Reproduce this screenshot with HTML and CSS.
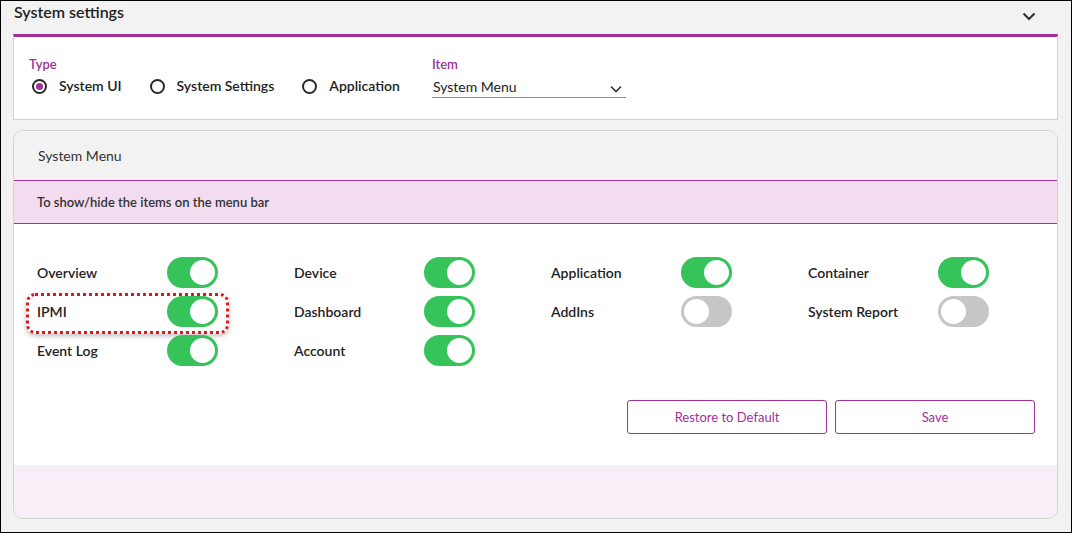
FILE: index.html
```html
<!DOCTYPE html>
<html>
<head>
<meta charset="utf-8">
<link rel="stylesheet" href="styles.css">
</head>
<body>
<div class="frame">
  <div class="page-head">
    <span class="page-title">System settings</span>
    <svg class="head-chevron" width="14" height="9" viewBox="0 0 14 9"><path d="M1.5 1.5 L7 7 L12.5 1.5" fill="none" stroke="#333" stroke-width="2.2"/></svg>
  </div>
  <div class="filter-card">
    <div class="field type-field">
      <div class="field-label">Type</div>
      <div class="radios">
        <label class="radio checked"><span class="dot"></span>System UI</label>
        <label class="radio"><span class="dot"></span>System Settings</label>
        <label class="radio"><span class="dot"></span>Application</label>
      </div>
    </div>
    <div class="field item-field">
      <div class="field-label">Item</div>
      <div class="select">
        <span>System Menu</span>
        <svg width="12" height="8" viewBox="0 0 12 8"><path d="M1 1.5 L6 6.5 L11 1.5" fill="none" stroke="#333" stroke-width="1.6"/></svg>
      </div>
    </div>
  </div>
  <div class="menu-card">
    <div class="menu-head">System Menu</div>
    <div class="menu-note">To show/hide the items on the menu bar</div>
    <div class="menu-body">
      <div class="switch-grid">
        <div class="sw-item"><span class="sw-label">Overview</span><span class="switch on"></span></div>
        <div class="sw-item"><span class="sw-label">Device</span><span class="switch on"></span></div>
        <div class="sw-item"><span class="sw-label">Application</span><span class="switch on"></span></div>
        <div class="sw-item"><span class="sw-label">Container</span><span class="switch on"></span></div>
        <div class="sw-item highlighted"><span class="sw-label">IPMI</span><span class="switch on"></span><span class="hl-box"></span></div>
        <div class="sw-item"><span class="sw-label">Dashboard</span><span class="switch on"></span></div>
        <div class="sw-item"><span class="sw-label">AddIns</span><span class="switch"></span></div>
        <div class="sw-item"><span class="sw-label">System Report</span><span class="switch"></span></div>
        <div class="sw-item"><span class="sw-label">Event Log</span><span class="switch on"></span></div>
        <div class="sw-item"><span class="sw-label">Account</span><span class="switch on"></span></div>
      </div>
      <div class="actions">
        <button class="btn">Restore to Default</button>
        <button class="btn">Save</button>
      </div>
    </div>
    <div class="menu-foot"></div>
  </div>
</div>
</body>
</html>
```

FILE: styles.css
```css
* { box-sizing: border-box; }
html, body { margin: 0; padding: 0; }
body {
  font-family: "Lato", "Liberation Sans", sans-serif;
  color: #222;
}
.frame {
  width: 1072px;
  height: 533px;
  border: 1px solid #000;
  background: #f2f2f2;
  padding: 0 13px 0 12px;
  overflow: hidden;
}
.page-head {
  height: 33px;
  display: flex;
  align-items: flex-start;
  justify-content: space-between;
  padding: 1px 22px 0 1px;
}
.page-title {
  font-size: 16px;
  font-weight: 600;
  color: #222;
  line-height: 20px;
}
.head-chevron { margin-top: 10px; }
.filter-card {
  background: #fff;
  border: 1px solid #d2d2d2;
  border-top: 3px solid #a0309a;
  height: 86px;
  display: flex;
  gap: 32px;
  padding: 19px 15px 0 15px;
}
.field-label {
  color: #a0309a;
  font-size: 13px;
  font-weight: 600;
  line-height: 16px;
}
.radios {
  display: flex;
  gap: 25px;
  margin-top: 4px;
}
.radio {
  display: flex;
  align-items: center;
  gap: 12px;
  font-size: 14px;
  font-weight: 600;
  color: #222;
  line-height: 20px;
}
.dot {
  width: 15px;
  height: 15px;
  border: 2px solid #2a2a2a;
  border-radius: 50%;
  margin-left: 3px;
  display: flex;
  align-items: center;
  justify-content: center;
}
.radio.checked .dot::after {
  content: "";
  width: 7px;
  height: 7px;
  border-radius: 50%;
  background: #a0309a;
}
.item-field { width: 194px; }
.select {
  margin-top: 3px;
  display: flex;
  align-items: center;
  justify-content: space-between;
  border-bottom: 1px solid #8a8a8a;
  padding: 0 4px 0 1px;
  height: 23px;
  font-size: 14px;
  color: #222;
}
.select svg { margin-top: 6px; }
.menu-card {
  margin-top: 10px;
  height: 389px;
  border: 1px solid #d2d2d2;
  border-radius: 10px;
  overflow: hidden;
  background: #fff;
  display: flex;
  flex-direction: column;
}
.menu-head {
  background: #f2f2f2;
  height: 50px;
  padding: 0 24px;
  display: flex;
  align-items: center;
  font-size: 14px;
  color: #333;
  border-bottom: 1px solid #a0309a;
}
.menu-note {
  background: #f3dcf0;
  height: 43px;
  padding: 0 23px;
  display: flex;
  align-items: center;
  font-size: 13px;
  font-weight: 600;
  color: #333;
  border-bottom: 1px solid #a0309a;
}
.menu-body {
  padding: 33px 22px 31px 23px;
}
.switch-grid {
  display: grid;
  grid-template-columns: repeat(4, 257px);
  row-gap: 8px;
}
.sw-item {
  position: relative;
  display: flex;
  align-items: center;
  height: 31px;
}
.sw-label {
  width: 130px;
  font-size: 14px;
  font-weight: 600;
  color: #222;
}
.switch {
  position: relative;
  width: 51px;
  height: 31px;
  border-radius: 16px;
  background: #c6c6c6;
}
.switch::after {
  content: "";
  position: absolute;
  top: 3px;
  left: 3px;
  width: 25px;
  height: 25px;
  border-radius: 50%;
  background: #fff;
}
.switch.on { background: #35c35a; }
.switch.on::after { left: 23px; }
.hl-box {
  position: absolute;
  left: -11px;
  top: -3px;
  width: 203px;
  height: 41px;
  border: 3px dotted #e0141e;
  border-radius: 9px;
  box-shadow: 0 2px 5px rgba(0,0,0,0.25);
  pointer-events: none;
}
.actions {
  display: flex;
  justify-content: flex-end;
  gap: 8px;
  margin-top: 34px;
}
.btn {
  width: 200px;
  height: 34px;
  background: #fff;
  border: 1px solid #a0309a;
  border-radius: 3px;
  color: #a0309a;
  font-family: inherit;
  font-size: 13px;
}
.menu-foot {
  flex: 1;
  background: #f8eef8;
}
```
